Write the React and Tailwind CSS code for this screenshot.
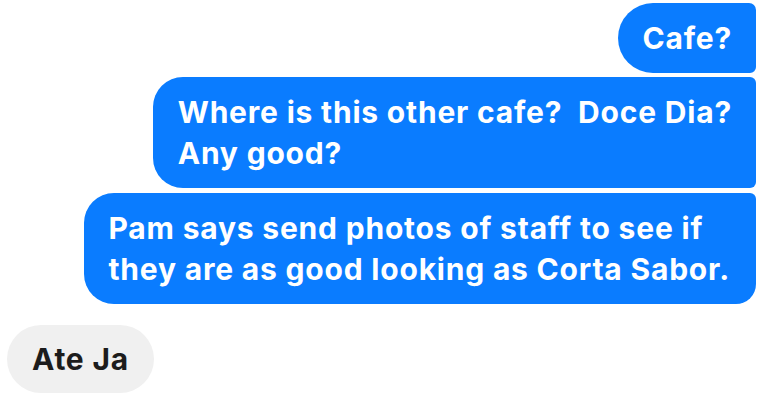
export default function App() {
  const font = { fontFamily: "Inter, 'Noto Sans', sans-serif" };

  return (
    <div className="w-[763px] h-[407px] bg-white overflow-hidden" style={font}>
      <div className="flex flex-col pt-[3px] px-[7px]">
        {/* outgoing */}
        <div className="flex flex-col items-end">
          <div className="bg-[#0a7cff] text-white font-bold text-[30px] tracking-[0.8px] leading-[41px] pl-[24px] pr-[24px] pt-[15px] pb-[14px] rounded-l-[35px] rounded-tr-[7px] rounded-br-[6px] whitespace-nowrap">
            Cafe?
          </div>
          <div className="mt-[4px] bg-[#0a7cff] text-white font-bold text-[30px] tracking-[0.8px] leading-[41px] pl-[25px] pr-[24px] pt-[15px] pb-[14px] rounded-l-[30px] rounded-r-[6px] whitespace-pre">
            {"Where is this other cafe?  Doce Dia?\nAny good?"}
          </div>
          <div className="mt-[5px] bg-[#0a7cff] text-white font-bold text-[30px] tracking-[0.8px] leading-[41px] pl-[25px] pr-[26px] pt-[15px] pb-[14px] rounded-l-[30px] rounded-tr-[6px] rounded-br-[20px] whitespace-pre">
            {"Pam says send photos of staff to see if\nthey are as good looking as Corta Sabor."}
          </div>
        </div>

        {/* incoming */}
        <div className="flex mt-[21px]">
          <div className="bg-[#f0f0f0] text-[#1c1c1c] font-bold text-[30px] tracking-[0.8px] leading-[41px] px-[25px] pt-[14px] pb-[13px] rounded-full">
            Ate Ja
          </div>
        </div>
      </div>
    </div>
  );
}
